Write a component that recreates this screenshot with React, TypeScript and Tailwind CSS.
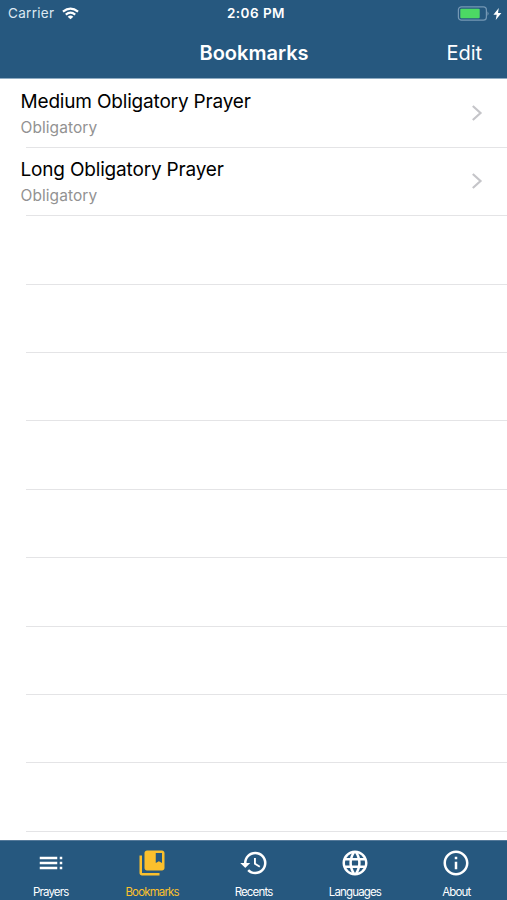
import type { ReactNode } from "react";
import { MdToc, MdCollectionsBookmark, MdHistory, MdLanguage, MdInfoOutline } from "react-icons/md";

const bookmarks = [
  { title: "Medium Obligatory Prayer", kind: "Obligatory" },
  { title: "Long Obligatory Prayer", kind: "Obligatory" },
];

function StatusBar() {
  return (
    <div className="grid h-[27px] grid-cols-3 items-center pl-[8px] pr-[5px] text-[13.5px] leading-none">
      <div className="flex items-center gap-[8px]">
        <span className="tracking-[0.3px] text-[#dce8f2]">Carrier</span>
        <svg width="17" height="13" viewBox="0 0 18 13" fill="none" stroke="#fff" strokeWidth="2.3">
          <path d="M1 4.6Q9-2 17 4.6" />
          <path d="M4 7.6Q9 3.5 14 7.6" />
          <path d="M6 9.9Q9 7.4 12 9.9L9 12.7Z" fill="#fff" stroke="none" />
        </svg>
      </div>
      <span className="pl-[2px] pt-[1px] text-center font-semibold tracking-[0.45px]">2:06 PM</span>
      <div className="flex items-center justify-end gap-[4px]">
        <svg width="32" height="15" viewBox="0 0 32 15">
          <rect x="1.4" y="0.8" width="28" height="13.4" rx="3" fill="none" stroke="#7598b5" strokeWidth="1.2" />
          <rect x="3.3" y="2.8" width="19.4" height="9.4" rx="1" fill="#4cd964" />
          <path d="M30.6 5.2q1.6 2.3 0 4.6Z" fill="#9db6ca" />
        </svg>
        <svg width="9" height="12" viewBox="0 0 9 12">
          <path d="M5.8 0 0.4 6.8H3.7L2.7 12 8.4 4.9H5Z" fill="#fff" />
        </svg>
      </div>
    </div>
  );
}

function Tab({ label, icon, active }: { label: string; icon: ReactNode; active?: boolean }) {
  return (
    <div className={`flex flex-1 flex-col items-center pt-[7px] ${active ? "text-[#fbc02d]" : "text-white"}`}>
      {icon}
      <span className="mt-[7px] text-[11.5px] leading-[14px] tracking-[-0.85px]">{label}</span>
    </div>
  );
}

export default function App() {
  return (
    <div className="flex h-[900px] w-[507px] flex-col overflow-hidden bg-white font-['Inter','Liberation_Sans',sans-serif]">
      <header className="h-[79.4px] shrink-0 border-b border-[#8eabc2] bg-[#26587f] text-white">
        <StatusBar />
        <div className="grid h-[52px] grid-cols-[1fr_auto_1fr] items-center pr-[25px]">
          <span />
          <h1 className="pl-[26px] text-[20px] font-semibold">Bookmarks</h1>
          <button className="justify-self-end text-[20px] tracking-[-0.05px]">Edit</button>
        </div>
      </header>
      <main className="min-h-0 flex-1 overflow-hidden">
        {bookmarks.map((item) => (
          <div key={item.title} className="h-[68.4px]">
            <div className="flex h-[67.4px] items-center justify-between pl-[20.5px] pr-[24px]">
              <div className="pt-[3.4px]">
                <div className="text-[19px] leading-[26px] tracking-[-0.18px] text-black">{item.title}</div>
                <div className="text-[15.5px] leading-[26px] tracking-[0.06px] text-[#929292]">{item.kind}</div>
              </div>
              <svg width="12" height="18" viewBox="0 0 12 18" fill="none" stroke="#c5c5c9" strokeWidth="2.2">
                <path d="M1.8 2 9.5 9 1.8 16" />
              </svg>
            </div>
            <div className="ml-[26px] h-px bg-[#e4e4e6]" />
          </div>
        ))}
        {Array.from({ length: 9 }, (_, i) => (
          <div key={i} className="flex h-[68.4px] items-end">
            <div className="ml-[26px] h-px flex-1 bg-[#e4e4e6]" />
          </div>
        ))}
      </main>
      <nav className="flex h-[60px] shrink-0 border-t border-[#54799a] bg-[#26587f]">
        <Tab label="Prayers" icon={<MdToc size={30} />} />
        <Tab label="Bookmarks" icon={<MdCollectionsBookmark size={30} />} active />
        <Tab label="Recents" icon={<MdHistory size={30} />} />
        <Tab label="Languages" icon={<MdLanguage size={30} />} />
        <Tab label="About" icon={<MdInfoOutline size={30} />} />
      </nav>
    </div>
  );
}
